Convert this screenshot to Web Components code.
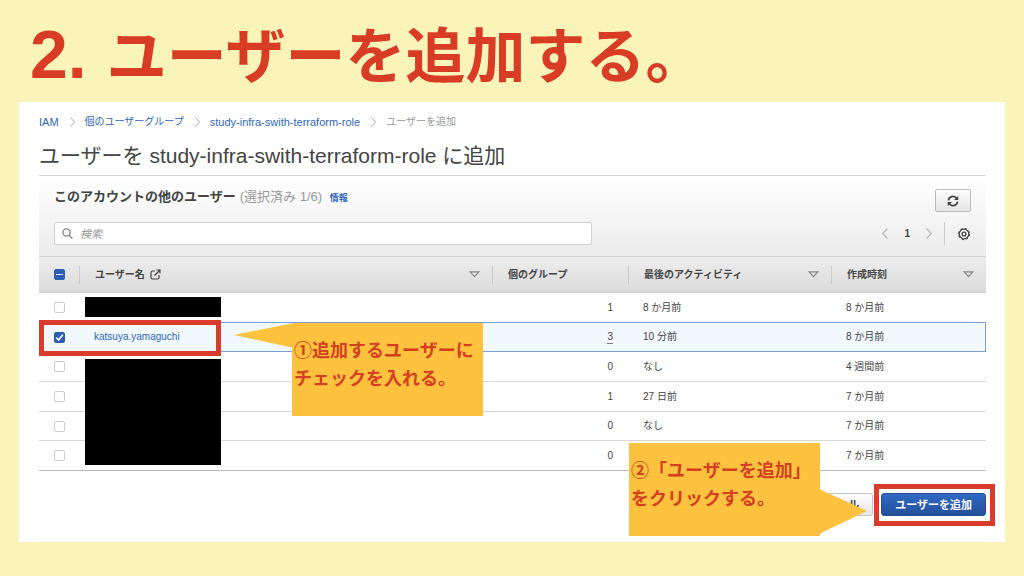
<!DOCTYPE html>
<html lang="ja">
<head>
<meta charset="utf-8">
<meta name="viewport" content="width=device-width, initial-scale=1">
<title>ユーザーを追加する</title>
<style>
  body {
    margin: 0;
    background: #fbf4b9;
    color: #444;
    font: 10px/16px "Liberation Sans", "Noto Sans CJK JP", sans-serif;
  }
</style>
</head>
<body>
<guide-slide>
  <span slot="number">2.</span>
  <span slot="heading">ユーザーを追加する。</span>
  <crumb-trail></crumb-trail>
  <page-title>ユーザーを study-infra-swith-terraform-role に追加</page-title>
  <table-toolbar></table-toolbar>
  <user-table></user-table>
  <form-actions></form-actions>
  <callout-note class="first" tail="left">①追加するユーザーに<br>チェックを入れる。</callout-note>
  <callout-note class="second" tail="right">②「ユーザーを追加」<br>をクリックする。</callout-note>
</guide-slide>

<script>
const define = (name, html, setup) => {
  const template = document.createElement('template');
  template.innerHTML = html;
  customElements.define(name, class extends HTMLElement {
    constructor() {
      super();
      this.attachShadow({ mode: 'open' }).append(template.content.cloneNode(true));
    }
    connectedCallback() {
      if (setup) setup(this.shadowRoot, this);
    }
  });
};

define('guide-slide', `
<style>
  :host { display: block; }
  h1 {
    display: flex; align-items: baseline; gap: 20px; margin: 0; padding: 10px 30px 0;
    color: #d93c25; font-size: 60px; line-height: 88px; font-weight: 700; white-space: nowrap;
  }
  .number { font-size: 68px; }
  main { position: relative; margin: 0 19px 34px; padding: 12px 19px 26px 20px; background: #fff; }
  ::slotted(callout-note) { position: absolute; z-index: 3; }
  ::slotted(.first) { left: 273px; top: 221px; }
  ::slotted(.second) { right: 185px; top: 341px; }
</style>
<h1><span class="number"><slot name="number"></slot></span><slot name="heading"></slot></h1>
<main><slot></slot></main>`);

define('crumb-trail', `
<style>
  :host { display: block; }
  ol { display: flex; align-items: center; gap: 10px; margin: 0; padding: 0; list-style: none; color: #999; }
  li { display: flex; align-items: center; gap: 11px; white-space: nowrap; }
  a { color: #2f67bd; text-decoration: none; }
  .latin { font-size: 11px; }
  svg { width: 5px; height: 10px; fill: none; stroke: #aaa; }
</style>
<nav aria-label="パンくず"><ol>
  <li><a href="#iam" class="latin">IAM</a><svg viewBox="0 0 5 10"><path d="M.5.5 4.5 5 .5 9.5"/></svg></li>
  <li><a href="#groups">個のユーザーグループ</a><svg viewBox="0 0 5 10"><path d="M.5.5 4.5 5 .5 9.5"/></svg></li>
  <li><a href="#role" class="latin">study-infra-swith-terraform-role</a><svg viewBox="0 0 5 10"><path d="M.5.5 4.5 5 .5 9.5"/></svg></li>
  <li aria-current="page">ユーザーを追加</li>
</ol></nav>`);

define('page-title', `
<style>
  :host { display: block; margin: 12px 0 5px; }
  h2 { margin: 0; font-size: 21px; line-height: 28px; font-weight: 400; }
</style>
<h2><slot></slot></h2>`);

define('table-toolbar', `
<style>
  :host {
    display: block; border-top: 1px solid #d5d5d5; padding: 13px 15px 11px;
    background: linear-gradient(#fff, #ececec);
  }
  .row { display: flex; align-items: center; justify-content: space-between; }
  .head { align-items: flex-start; margin-bottom: 10px; }
  h3 { margin: 0; font-size: 13px; line-height: 16px; white-space: nowrap; }
  small { margin-left: 4px; font-size: 13px; font-weight: 400; color: #999; }
  a { margin-left: 4px; font-size: 9px; color: #2f67bd; text-decoration: none; }
  button { display: grid; place-items: center; margin: 0; padding: 0; border: 0; background: none; color: #444; font: inherit; }
  svg { display: block; fill: none; stroke: currentColor; }
  .refresh {
    box-sizing: border-box; width: 36px; height: 23px; border: 1px solid #bbb; border-radius: 2px;
    background: linear-gradient(#fff, #e4e4e4);
  }
  .search {
    display: flex; align-items: center; gap: 7px; box-sizing: border-box; flex: 0 1 538px; height: 23px;
    padding: 0 7px; border: 1px solid #d0d0d0; border-radius: 2px; background: #fff; color: #888;
  }
  input {
    flex: 1; min-width: 0; padding: 0; border: 0; outline: 0; background: none;
    font: italic 11px/16px "Liberation Sans", "Noto Sans CJK JP", sans-serif; color: #444;
  }
  input::placeholder { color: #999; opacity: 1; }
  .pager { display: flex; align-items: center; gap: 16px; }
  .pager .arrow { color: #bbb; width: 6px; }
  .gear { padding-left: 12px; height: 23px; border-left: 1px solid #ccc; margin-left: -4px; }
</style>
<div class="row head">
  <h3>このアカウントの他のユーザー<small>(選択済み 1/6)</small> <a href="#info">情報</a></h3>
  <button class="refresh" aria-label="更新">
    <svg width="12" height="12" viewBox="0 0 12 12" stroke-width="1.7"><path d="M1.400 5.300A4.600 4.600 0 0 1 9.400 3M10.600 6.700A4.600 4.600 0 0 1 2.600 9"/><path d="M11.300.8v4.300H7zM.7 11.200V6.900h4.300z" fill="currentColor" stroke="none"/></svg>
  </button>
</div>
<div class="row">
  <label class="search">
    <svg width="11" height="11" viewBox="0 0 11 11" stroke-width="1.4"><circle cx="4.5" cy="4.5" r="3.6"/><path d="M7.2 7.2 10.4 10.4"/></svg>
    <input type="text" placeholder="検索" aria-label="検索">
  </label>
  <div class="pager">
    <button class="arrow" aria-label="前へ"><svg width="6" height="11" viewBox="0 0 6 11" stroke-width="1.3"><path d="M5.5.5.7 5.5l4.8 5"/></svg></button>
    <b>1</b>
    <button class="arrow" aria-label="次へ"><svg width="6" height="11" viewBox="0 0 6 11" stroke-width="1.3"><path d="M.5.5l4.8 5-4.8 5"/></svg></button>
    <button class="gear" aria-label="設定"><svg width="14" height="14" viewBox="0 0 14 14"><circle cx="7" cy="7" r="4.800" stroke-width="1.300"/><circle cx="7" cy="7" r="5.700" stroke-width="1" stroke-dasharray="2.240 2.237"/><circle cx="7" cy="7" r="1.900" stroke-width="1.300"/></svg></button>
  </div>
</div>`);

const users = [
  { groups: 1, active: '8 か月前', created: '8 か月前', mask: 'one' },
  { name: 'katsuya.yamaguchi', groups: 3, active: '10 分前', created: '8 か月前' },
  { groups: 0, active: 'なし', created: '4 週間前', mask: 'four' },
  { groups: 1, active: '27 日前', created: '7 か月前' },
  { groups: 0, active: 'なし', created: '7 か月前' },
  { groups: 0, active: '', created: '7 か月前' },
];

define('user-table', `
<style>
  :host { display: block; }
  table { width: 100%; table-layout: fixed; border-collapse: separate; border-spacing: 0; }
  .c-check { width: 40px; } .c-groups { width: 136px; } .c-active { width: 203px; } .c-created { width: 155px; }
  thead { background: linear-gradient(#eee, #dadada); }
  th {
    box-sizing: border-box; height: 37px; padding: 0; text-align: left;
    border-top: 1px solid #d0d0d0; border-bottom: 1px solid #d0d0d0;
  }
  .label {
    display: flex; align-items: center; justify-content: space-between; height: 18px;
    padding: 0 12px 0 15px; border-left: 1px solid #ccc; white-space: nowrap;
  }
  .name { display: flex; align-items: center; gap: 5px; }
  th svg { display: block; fill: none; stroke: #444; }
  th .sort { stroke: #888; }
  td { position: relative; box-sizing: border-box; height: 30px; padding: 0 15px; border-bottom: 1px solid #d8d8d8; }
  tr:nth-child(3n + 2) td { height: 29px; }
  tbody tr:last-child td { border-bottom-color: #bbb; }
  .number { text-align: right; }
  .number span { display: inline-block; line-height: 12px; border-bottom: 1px dashed #777; }
  tr.selected td { background: #f1f8fe; border-bottom-color: #7c9fd6; }
  tr.selected td:last-child { border-right: 1px solid #7c9fd6; }
  tr:has(+ .selected) td { border-bottom-color: #7c9fd6; }
  a { color: #2f67bd; text-decoration: none; }
  input {
    appearance: none; box-sizing: border-box; display: block; width: 11px; height: 11px;
    margin: 0 15px; border: 1px solid #ccc; border-radius: 2px; background: #fff center/11px no-repeat;
  }
  td input { margin: 0; }
  input:checked, input:indeterminate { border-color: #2b5fb4; background-color: #2b5fb4; }
  input:checked { background-image: url("data:image/svg+xml,%3Csvg xmlns='http://www.w3.org/2000/svg' viewBox='0 0 11 11'%3E%3Cpath d='M2.3 5.6 4.6 8 8.8 2.8' fill='none' stroke='white' stroke-width='1.6'/%3E%3C/svg%3E"); }
  input:indeterminate { background-image: linear-gradient(#fff, #fff); background-size: 7px 1px; }
  .mask { position: absolute; left: 6px; width: 136px; background: #000; z-index: 1; }
  .mask.one { top: 4px; height: 20px; }
  .mask.four { top: 7px; height: 106px; }
  .frame {
    position: absolute; left: 0; top: -3px; z-index: 2; box-sizing: border-box;
    width: 182px; height: 36px; border: 5px solid #d93c2b; pointer-events: none;
  }
</style>
<table>
  <colgroup><col class="c-check"><col><col class="c-groups"><col class="c-active"><col class="c-created"></colgroup>
  <thead><tr>
    <th><input type="checkbox" class="all" aria-label="すべて選択"></th>
    <th><div class="label"><span class="name">ユーザー名 <svg width="11" height="11" viewBox="0 0 11 11"><path d="M5 2H2.5Q1 2 1 3.500V8.500Q1 10 2.500 10H7.500Q9 10 9 8.500V6M4.500 6.500 9.500 1.500M6.500 1H10V4.500" stroke-width="1.200"/></svg></span><svg class="sort" width="11" height="7" viewBox="0 0 11 7"><path d="M1.200.9H9.800L5.500 5.700Z" stroke-width="1.200"/></svg></div></th>
    <th><div class="label">個のグループ</div></th>
    <th><div class="label">最後のアクティビティ<svg class="sort" width="11" height="7" viewBox="0 0 11 7"><path d="M1.200.9H9.800L5.500 5.700Z" stroke-width="1.200"/></svg></div></th>
    <th><div class="label">作成時刻<svg class="sort" width="11" height="7" viewBox="0 0 11 7"><path d="M1.200.9H9.800L5.500 5.700Z" stroke-width="1.200"/></svg></div></th>
  </tr></thead>
  <tbody></tbody>
</table>`, root => {
  root.querySelector('.all').indeterminate = true;
  root.querySelector('tbody').innerHTML = users.map((u, i) => `
    <tr class="${u.name ? 'selected' : ''}">
      <td><input type="checkbox" aria-label="ユーザー ${i + 1} を選択" ${u.name ? 'checked' : ''}>${u.name ? '<span class="frame"></span>' : ''}</td>
      <td>${u.name ? `<a href="#user">${u.name}</a>` : ''}${u.mask ? `<span class="mask ${u.mask}"></span>` : ''}</td>
      <td class="number">${u.name ? `<span>${u.groups}</span>` : u.groups}</td>
      <td>${u.active}</td>
      <td>${u.created}</td>
    </tr>`).join('');
});

define('form-actions', `
<style>
  :host { display: flex; justify-content: flex-end; gap: 8px; margin-top: 22px; }
  button {
    box-sizing: border-box; height: 23px; margin: 0; padding: 0 13px; border: 1px solid #c4c4c4; border-radius: 3px;
    background: linear-gradient(#fff, #e6e6e6); color: #444; font: 700 11px/16px "Liberation Sans", "Noto Sans CJK JP", sans-serif;
  }
  .primary { border-color: #23509b; background: linear-gradient(#3069c4, #234f98); color: #fff; }
  .target { position: relative; display: flex; }
  .target::after {
    content: ""; position: absolute; inset: -9px -9px -10px -7px; border: 5px solid #d93c2b; pointer-events: none;
  }
</style>
<button>キャンセル</button>
<div class="target"><button class="primary">ユーザーを追加</button></div>`);

define('callout-note', `
<style>
  :host { display: block; width: 191px; height: 93px; background: #ffc23f; }
  p { margin: 0; padding: 14px 0 0 2px; color: #d43f20; font-size: 18px; line-height: 28px; font-weight: 700; white-space: nowrap; }
  svg { position: absolute; display: none; fill: #ffc23f; }
  :host([tail="left"]) .left { display: block; right: 189px; top: 0; }
  :host([tail="right"]) .right { display: block; left: 190px; top: 46px; }
</style>
<svg class="left" width="60" height="25" viewBox="0 0 60 25"><path d="M0 12 60 0V25Z"/></svg>
<svg class="right" width="48" height="46" viewBox="0 0 48 46"><path d="M0 0 48 22 0 45Z"/></svg>
<p><slot></slot></p>`);
</script>
</body>
</html>
